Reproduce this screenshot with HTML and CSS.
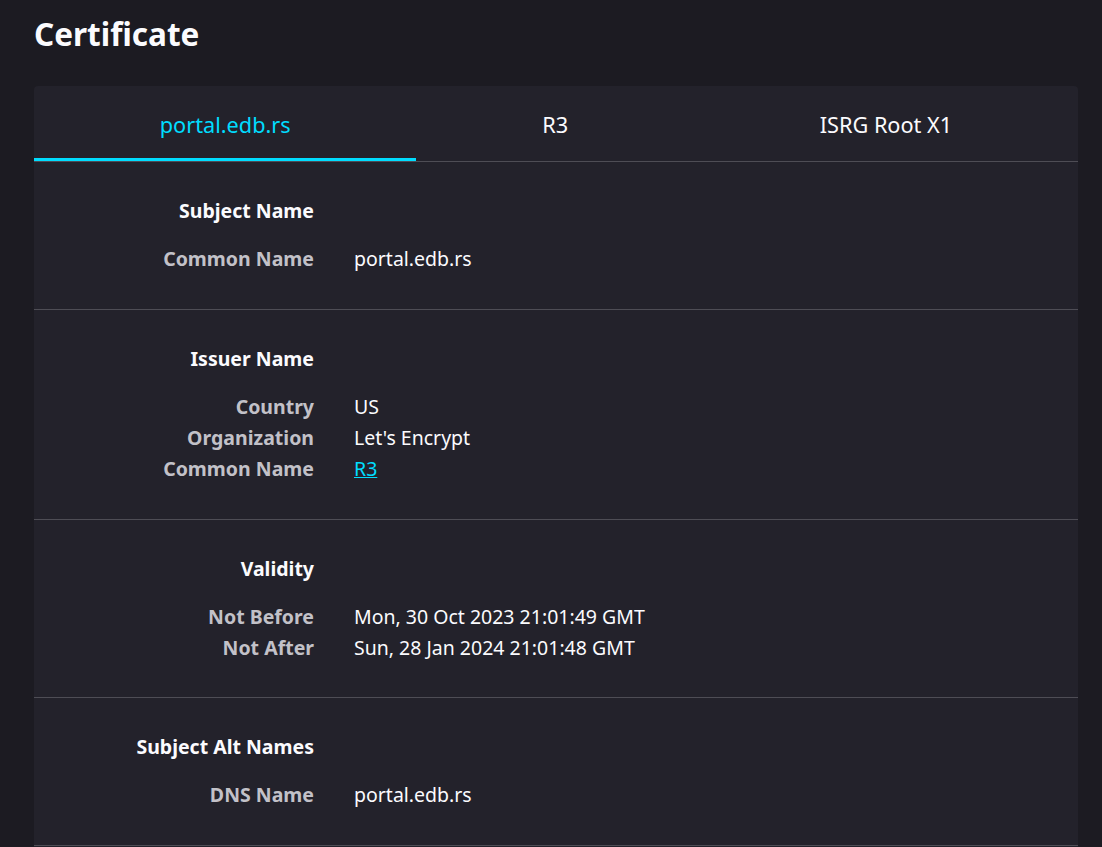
FILE: index.html
```html
<!DOCTYPE html>
<html>
<head>
  <meta charset="utf-8">
  <title>Certificate</title>
  <link rel="stylesheet" href="styles.css">
</head>
<body>
<div class="page">
  <h1 class="title">Certificate</h1>
  <div class="card">
    <div class="tabs">
      <span class="tab active">portal.edb.rs</span>
      <span class="tab">R3</span>
      <span class="tab">ISRG Root X1</span>
    </div>

    <div class="section">
      <div class="head">Subject Name</div>
      <div class="row"><span class="label">Common Name</span><span class="value">portal.edb.rs</span></div>
    </div>

    <div class="section">
      <div class="head">Issuer Name</div>
      <div class="row"><span class="label">Country</span><span class="value">US</span></div>
      <div class="row"><span class="label">Organization</span><span class="value">Let's Encrypt</span></div>
      <div class="row"><span class="label">Common Name</span><span class="value"><a href="#">R3</a></span></div>
    </div>

    <div class="section validity">
      <div class="head">Validity</div>
      <div class="row"><span class="label">Not Before</span><span class="value">Mon, 30 Oct 2023 21:01:49 GMT</span></div>
      <div class="row"><span class="label">Not After</span><span class="value">Sun, 28 Jan 2024 21:01:48 GMT</span></div>
    </div>

    <div class="section">
      <div class="head">Subject Alt Names</div>
      <div class="row"><span class="label">DNS Name</span><span class="value">portal.edb.rs</span></div>
    </div>

    <div class="more"></div>
  </div>
</div>
</body>
</html>
```

FILE: styles.css
```css
html, body { margin: 0; padding: 0; background-color: #1c1b22; }
body { font-family: "Noto Sans", "Open Sans", sans-serif; color: #fbfbfe; overflow: hidden; }
.page { padding: 0 24px 0 34px; }
.title { margin: 0; padding-top: 12px; font-size: 31.5px; line-height: 44px; font-weight: 700; height: 74px; }
.card { background-color: #23222b; border-radius: 4px; }
.tabs { display: flex; border-bottom: 1px solid #4e4d55; }
.tab { flex: 1 1 auto; text-align: center; font-size: 21.7px; padding-top: 6px; line-height: 66px; height: 66px; border-bottom: 3px solid transparent; color: #fbfbfe; }
.tab.active { color: #00ddff; border-bottom-color: #00ddff; }
.section { padding: 33px 0 35px; border-bottom: 1px solid #4e4d55; }
.section.validity { padding-bottom: 34px; }
.head { width: 280px; text-align: right; font-size: 19.5px; font-weight: 700; line-height: 31px; margin-bottom: 17px; }
.row { display: flex; font-size: 19.5px; line-height: 31px; }
.row .label { width: 280px; flex: none; text-align: right; font-weight: 700; color: #c2c1c8; }
.row .value { padding-left: 40px; }
.row a { color: #00ddff; text-decoration: underline; }
.more { height: 60px; }
```
